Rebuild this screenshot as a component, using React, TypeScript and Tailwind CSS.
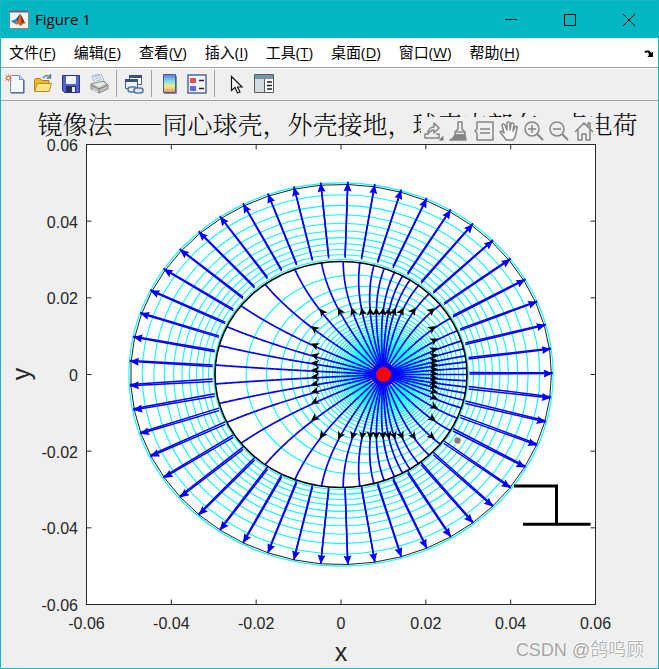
import type { ReactNode } from "react";

type Point = [number, number];

// Physical setup: charge at (D, 0) inside an inner shell of radius A, grounded outer shell of radius B.
const D = 0.01;
const A = 0.03;
const B = 0.05;
const IMAGE_X = (A * A) / D;
const IMAGE_Q = -A / D;
const LINES = 49;

const CX = 341;
const CY = 374.5;
const SX = 509 / 0.12;
const SY = 460 / 0.12;

const px = (x: number) => CX + x * SX;
const py = (y: number) => CY - y * SY;

function toPath(points: Point[], close = false) {
  return "M" + points.map(([x, y]) => `${x.toFixed(1)} ${y.toFixed(1)}`).join("L") + (close ? "Z" : "");
}

function potential(x: number, y: number) {
  return 1 / Math.hypot(x - D, y) + IMAGE_Q / Math.hypot(x - IMAGE_X, y);
}

function field(x: number, y: number): Point {
  const r1 = Math.hypot(x - D, y) ** 3;
  const r2 = Math.hypot(x - IMAGE_X, y) ** 3;
  const ex = (x - D) / r1 + (IMAGE_Q * (x - IMAGE_X)) / r2;
  const ey = y / r1 + (IMAGE_Q * y) / r2;
  const n = Math.hypot(ex, ey);
  return [ex / n, ey / n];
}

// Midpoint integration along the field (h > 0) or back towards the charge (h < 0).
function march([startX, startY]: Point, h: number) {
  let x = startX;
  let y = startY;
  const points: Point[] = [];
  while (Math.hypot(x, y) < 0.0296 && Math.hypot(x - D, y) > 0.0006 && points.length < 400) {
    const [ax, ay] = field(x, y);
    const [bx, by] = field(x + (ax * h) / 2, y + (ay * h) / 2);
    x += bx * h;
    y += by * h;
    points.push([px(x), py(y)]);
  }
  return points;
}

// Bisects along each ray leaving the charge, where the potential only falls.
function traceContour(level: number) {
  const points: Point[] = [];
  for (let i = 0; i < 120; i++) {
    const t = (i / 120) * 2 * Math.PI;
    let lo = 0.0001;
    let hi = 0.041;
    for (let n = 0; n < 24; n++) {
      const r = (lo + hi) / 2;
      if (potential(D + r * Math.cos(t), r * Math.sin(t)) > level) lo = r;
      else hi = r;
    }
    points.push([px(D + lo * Math.cos(t)), py(lo * Math.sin(t))]);
  }
  return toPath(points, true);
}

function dart([x, y]: Point, dx: number, dy: number, length: number, half: number, notch: number) {
  const n = Math.hypot(dx, dy) || 1;
  const ux = dx / n;
  const uy = dy / n;
  return toPath(
    [
      [x, y],
      [x - ux * length - uy * half, y - uy * length + ux * half],
      [x - ux * notch, y - uy * notch],
      [x - ux * length + uy * half, y - uy * length - ux * half],
    ],
    true
  );
}

// Arrow tips of the upper half on the canvas, as x and height above the axis.
const UPPER_TIPS: Point[] = [
  [438, 4.5],
  [438, 9],
  [438, 13.5],
  [438, 19],
  [438, 25.5],
  [438, 35],
  [436, 47.5],
  [435, 65.5],
  [416, 66],
  [403.5, 66],
  [395.5, 66],
  [389.5, 66],
  [383.5, 66],
  [376.5, 66],
  [370, 66],
  [361.5, 66],
  [351.5, 66],
  [338, 66],
  [319.5, 65],
  [311, 47.5],
  [311, 30],
  [311, 19],
  [311, 11],
  [311, 3.5],
];
const tips: Point[] = [[438, 0], ...UPPER_TIPS, ...UPPER_TIPS.map(([x, y]): Point => [x, -y])];

const innerLines = tips.map(([x, y]) => {
  const start: Point = [(x - CX) / SX, y / SY];
  return toPath([...march(start, -0.0002).reverse(), [x, CY - y], ...march(start, 0.0002)]);
});
const innerHeads = tips.map(([x, y]) => {
  const [ex, ey] = field((x - CX) / SX, y / SY);
  return dart([x, CY - 1 - y], ex * SX, -ey * SY, 8, 4, 6);
});
const contours = Array.from({ length: 55 }, (_, k) => traceContour(4.2 * (k + 1)));
const shells = Array.from({ length: 11 }, (_, k) => 1 / (1 / B + (k * 4) / 3));

const angles = Array.from({ length: LINES }, (_, k) => (k * 2 * Math.PI) / LINES);
const outerLines = angles.map((t) => {
  const c = Math.cos(t);
  const s = Math.sin(t);
  const from: Point = [px(0.0303 * c), py(0.0303 * s) - 0.5];
  const to: Point = [px(0.0499 * c), py(0.0499 * s) - 1];
  // the retraced line drifts further from the first one on the lower half
  const drift = s < -0.01 ? 2.5 : 1.5;
  return {
    path: toPath([from, to]),
    again: toPath([
      [from[0], from[1] - drift],
      [to[0], to[1] - drift / 2],
    ]),
    head: dart(to, to[0] - from[0], to[1] - from[1], 9, 4, 8),
  };
});
const outline = toPath(
  angles.map((t): Point => [px(0.0496 * Math.cos(t)), py(0.0496 * Math.sin(t))]),
  true
);

const TICKS = [-0.06, -0.04, -0.02, 0, 0.02, 0.04, 0.06];
const tickLabel = (v: number) => (v === 0 ? "0" : v.toFixed(2));

const MENUS = [
  ["文件", "F"],
  ["编辑", "E"],
  ["查看", "V"],
  ["插入", "I"],
  ["工具", "T"],
  ["桌面", "D"],
  ["窗口", "W"],
  ["帮助", "H"],
];

export default function App() {
  return (
    <div
      lang="zh-CN"
      className="flex min-h-screen flex-col border border-[#18b6c3] bg-[#efefef] font-['Open_Sans','Noto_Sans_CJK_SC',sans-serif] text-black"
    >
      <TitleBar />
      <MenuBar />
      <ToolBar />
      <main className="relative">
        <h1 className="absolute inset-x-0 top-2 pl-4 whitespace-nowrap text-center font-['Noto_Serif_CJK_SC','Noto_Sans_CJK_SC',serif] text-[25px] leading-7 font-light">
          镜像法——同心球壳，外壳接地，球壳内部有一点电荷
        </h1>
        <Plot />
        <AxesToolbar />
        <div className="absolute right-3.5 bottom-1 font-['Liberation_Sans','Noto_Sans_CJK_SC',sans-serif] text-lg leading-7 font-light text-[#a6a6a6] [text-shadow:-1px_-1px_0_#fff]">
          CSDN @鸽呜顾
        </div>
      </main>
    </div>
  );
}

function TitleBar() {
  return (
    <header className="flex h-[37px] items-center bg-[#00b7c3]">
      <svg className="ml-2 size-5" viewBox="0 0 20 20">
        <rect x="0.5" y="0.5" width="19" height="18" fill="#f4f4f4" stroke="#7d8b93" />
        <path d="M1 1.5h18" stroke="#3f7486" strokeWidth="2" />
        <path d="M2 11l5-2 2 2-3 3z" fill="#3d7fb5" />
        <path d="M7 9l4-5 1 1-3 7z" fill="#27527e" />
        <path d="M11 4c2 1 3 7 6 10-2-1-3 0-4 1-2 2-3-1-4-1-1 0-1 1-3 0 3-2 4-6 5-10z" fill="#e0641e" />
        <path d="M11.500 5c1 3 1 7 1 9 1-1 2-2 4-1-2-2-3-6-5-8z" fill="#8b2b17" />
      </svg>
      <span className="ml-1.5 text-[15px]">Figure 1</span>
      <div className="ml-auto flex">
        <WindowButton label="Minimize">
          <path d="M0 5.500h12" />
        </WindowButton>
        <WindowButton label="Maximize">
          <path d="M.5.5h11v11H.5z" />
        </WindowButton>
        <WindowButton label="Close">
          <path d="M0 0l12 12M12 0L0 12" />
        </WindowButton>
      </div>
    </header>
  );
}

function WindowButton({ label, children }: { label: string; children: ReactNode }) {
  return (
    <button aria-label={label} className="grid h-9 w-[59px] place-items-center hover:bg-black/10">
      <svg className="size-3" viewBox="0 0 12 12" fill="none" stroke="#000">
        {children}
      </svg>
    </button>
  );
}

function MenuBar() {
  return (
    <nav className="flex h-[30px] items-center gap-[18px] border-b border-[#a0a0a0] bg-white pr-1 pl-2 text-[15px]">
      {MENUS.map(([name, key]) => (
        <button key={key} className="whitespace-nowrap">
          {name}(<span className="underline underline-offset-2">{key}</span>)
        </button>
      ))}
      <button aria-label="Dock figure" className="ml-auto">
        <svg className="h-2 w-2.5" viewBox="0 0 10 8">
          <path d="M0 3l2-1.500h3L7.500 4 9 2.500V8H3.500L5 6 4 3 2 4z" fill="#000" />
        </svg>
      </button>
    </nav>
  );
}

function Tool({ label, children }: { label: string; children: ReactNode }) {
  return (
    <button aria-label={label} className="grid size-7 place-items-center">
      <svg className="size-5" viewBox="0 0 20 20" fill="none">
        {children}
      </svg>
    </button>
  );
}

function Separator() {
  return <span className="mx-[3px] h-[27px] w-px bg-[#a0a0a0]" />;
}

function ToolBar() {
  return (
    <div className="flex h-[33px] items-center border-t border-b border-t-white border-b-[#a0a0a0] pb-0.5">
      <Tool label="New Figure">
        <path d="M5.500 1.500h9l4 4v13h-13z" fill="#f3f8ff" stroke="#6f8fbf" />
        <path d="M14.500 1.500v4h4" fill="#c9daf1" stroke="#6f8fbf" />
        <path d="M19 6v13H6" stroke="#375a8c" />
        <path d="M0 1l7 6M0 7l7-6M3.500 0v8M0 4h7" stroke="#f0a47a" />
        <circle cx="3.500" cy="4" r="2" fill="#fff0d0" stroke="#dd5828" />
      </Tool>
      <Tool label="Open File">
        <path d="M1.500 17V5.500l1-1h5l1.500 2h7V17z" fill="#e9b93a" stroke="#b28312" />
        <path d="M1.500 17.500l3-8h14l-2.500 8z" fill="#fbe588" stroke="#bd8c17" />
        <path d="M10 4c2-3 5-3 7-1M17.500 0v4h-4" stroke="#5d7c9e" strokeWidth="1.500" />
      </Tool>
      <Tool label="Save Figure">
        <path d="M1.500 1.500h17v17h-15l-2-2z" fill="#5362cf" stroke="#26338f" />
        <path d="M5 2h10v8H5z" fill="#e8f1fc" />
        <path d="M5 5l6-3h4L5 8z" fill="#fff" />
        <path d="M5 12h10v6H5z" fill="#26304f" />
        <path d="M11 13h3v5h-3z" fill="#e4e4e9" />
      </Tool>
      <Tool label="Print Figure">
        <path d="M6 10L3 2l9-2 4 9z" fill="#edf6ff" stroke="#9fb2c8" />
        <path d="M5 3l6-1.500M6 5l6-1.500M7 7l6-1.500" stroke="#a7bad4" />
        <path d="M2 10l13-3 4 4v4l-9 4-8-4z" fill="#c2c2bd" stroke="#888" />
        <path d="M2 11l8 4 9-4M10 15v4" stroke="#777" />
        <path d="M4 10l10-2 2 2-6 3z" fill="#ececea" />
        <path d="M4 16l5 2" stroke="#f0f0f0" />
      </Tool>
      <Separator />
      <Tool label="Link Plot">
        <path d="M5.500 1.500h12v9h-12z" fill="#fff" stroke="#415f91" />
        <path d="M5 2.500h13" stroke="#385381" strokeWidth="3" />
        <path d="M1.500 5.500h12v9h-12z" fill="#eef3f9" stroke="#415f91" />
        <path d="M1 6.500h13" stroke="#385381" strokeWidth="3" />
        <rect x="4" y="13" width="9" height="5" rx="2.500" fill="#dfe8f2" stroke="#55779b" strokeWidth="1.500" />
        <rect x="10" y="14" width="9" height="5" rx="2.500" fill="#dfe8f2" stroke="#55779b" strokeWidth="1.500" />
      </Tool>
      <Separator />
      <Tool label="Insert Colorbar">
        <defs>
          <linearGradient id="colorbar" x1="0" y1="0" x2="0" y2="1">
            <stop stopColor="#6476df" />
            <stop offset=".35" stopColor="#79dbed" />
            <stop offset=".65" stopColor="#f2ee87" />
            <stop offset="1" stopColor="#ed8d6b" />
          </linearGradient>
        </defs>
        <path d="M4.500.5h12v18h-12z" fill="url(#colorbar)" stroke="#465f87" />
        <path d="M17.500 2v17.500H5" stroke="#7e8ca2" />
      </Tool>
      <Tool label="Insert Legend">
        <path d="M1 1h18v18H1z" fill="#f2f5ff" stroke="#526a98" strokeWidth="1.500" />
        <path d="M3 4h6v5H3z" fill="#df5058" />
        <path d="M3 12h6v5H3z" fill="#6468e8" />
        <path d="M12 6.500h5M12 14.500h5" stroke="#222" strokeWidth="1.500" />
      </Tool>
      <Separator />
      <span className="w-1" />
      <Tool label="Edit Plot">
        <path d="M5.500 2.500v14l3.500-3 2.500 5.500 2.500-1-2.500-5h4.500z" fill="#fff" stroke="#111" strokeWidth="1.200" />
      </Tool>
      <Tool label="Open Property Inspector">
        <path d="M.5.5h19v18H.5z" fill="#fff" stroke="#595959" />
        <path d="M1 1h18v4H1z" fill="#7595a8" />
        <path d="M1 5h10v13H1z" fill="#d2dbe2" />
        <path d="M10.500 5v13" stroke="#555" />
        <path d="M13 8h5M13 11.500h5M13 15h5" stroke="#222" strokeWidth="1.500" />
      </Tool>
    </div>
  );
}

function Plot() {
  return (
    <svg
      role="img"
      aria-label="Field lines and equipotentials"
      className="block w-full font-['Liberation_Sans',sans-serif]"
      viewBox="1 101 657 567"
      fill="none"
    >
      <rect x="86.500" y="144.500" width="509" height="460" fill="#fff" stroke="#262626" />
      {TICKS.map((v) => (
        <g key={v} stroke="#262626">
          <path d={`M${px(v)} 604.500v-5M${px(v)} 144.500v5`} />
          <path d={`M86.500 ${py(v)}h5M595.500 ${py(v)}h-5`} />
        </g>
      ))}
      {TICKS.map((v) => (
        <g key={v} fill="#262626" fontSize="16">
          <text x={px(v)} y="629" textAnchor="middle">
            {tickLabel(v)}
          </text>
          <text x="78" y={py(v) + 6.5} textAnchor="end">
            {tickLabel(v)}
          </text>
        </g>
      ))}
      <text x={CX} y="661" textAnchor="middle" fontSize="25" fill="#262626">
        x
      </text>
      <text transform="translate(30 374) rotate(-90)" textAnchor="middle" fontSize="25" fill="#262626">
        y
      </text>

      <g stroke="#00ffff" strokeWidth="1.100">
        {shells.map((r) => (
          <ellipse key={r} cx={CX} cy={CY} rx={r * SX} ry={r * SY} />
        ))}
        {contours.map((d, i) => (
          <path key={i} d={d} />
        ))}
      </g>
      <path d={outline} stroke="#222" />
      <g stroke="#0000ff" strokeWidth="1.700">
        {innerLines.map((d, i) => (
          <path key={i} d={d} />
        ))}
      </g>
      <path d={innerHeads.join("")} fill="#000" />
      <ellipse cx={CX} cy={CY} rx="126" ry="113" stroke="#000" strokeWidth="1.600" />
      {outerLines.map((line, i) => (
        <g key={i} stroke="#0000ff">
          <path d={line.path} strokeWidth="1.500" />
          <path d={line.again} strokeWidth="1.500" />
          <path d={line.head} fill="#0000ff" stroke="none" />
        </g>
      ))}
      <circle cx="383.500" cy="374.500" r="12" fill="#0000ff" />
      <circle cx="383.500" cy="374.500" r="7.500" fill="#ff0000" />
      <circle cx="457.500" cy="440.500" r="4.500" fill="#fffbe6" />
      <circle cx="457.500" cy="440.500" r="3.200" fill="#808080" />
      <path d="M514 486h42.500v38M523 524.300h67.500" stroke="#000" strokeWidth="3" />
    </svg>
  );
}

function AxesTool({ label, children }: { label: string; children: ReactNode }) {
  return (
    <button aria-label={label} className="grid h-[27px] w-[25px] place-items-center">
      <svg
        className="size-5"
        viewBox="0 0 20 20"
        fill="none"
        stroke="#858585"
        strokeWidth="1.500"
        strokeLinejoin="round"
      >
        {children}
      </svg>
    </button>
  );
}

function AxesToolbar() {
  return (
    <div className="absolute top-4 right-[62px] flex bg-[#efefef]">
      <AxesTool label="Export">
        <path d="M4 13H1v4h14v-4h-3" />
        <path d="M4 13c0-5 3-7 6-7V2l5 5-5 5V9c-3 0-4 1-6 4z" />
        <path d="M19.500 14.500v5h-5z" fill="#777" stroke="none" />
      </AxesTool>
      <AxesTool label="Brush">
        <path d="M9 1h4v7l3 3v3H6v-3l3-3z" />
        <path d="M6 11h10" />
        <path d="M6 14h10l1 5H1c3-1 4-3 5-5z" fill="#858585" />
      </AxesTool>
      <AxesTool label="Data Tips">
        <path d="M3 1h16v18H3v-7l-2-2 2-2z" />
        <path d="M6 8h10M6 12h10" />
      </AxesTool>
      <AxesTool label="Pan">
        <path
          d="M7 19c-1-3-5-6-6-8 1-2 3 0 4 1L3 4c1-2 2-1 3 0l2 5V2c1-2 2-1 3 0v7l1-6c1-2 2-1 3 0l-1 7 2-4c1-1 3-1 2 1-1 4-1 9-4 12z"
          fill="#f7f7f7"
        />
      </AxesTool>
      <AxesTool label="Zoom In">
        <circle cx="8" cy="8" r="7" />
        <path d="M4 8h8M8 4v8" />
        <path d="M13 13l6 6" strokeWidth="2" />
      </AxesTool>
      <AxesTool label="Zoom Out">
        <circle cx="8" cy="8" r="7" />
        <path d="M4 8h8" />
        <path d="M13 13l6 6" strokeWidth="2" />
      </AxesTool>
      <AxesTool label="Restore View">
        <path d="M1 11l9-9 9 9M4 9v10h4v-6h4v6h4V9M14 5V2h2v5" />
      </AxesTool>
    </div>
  );
}
